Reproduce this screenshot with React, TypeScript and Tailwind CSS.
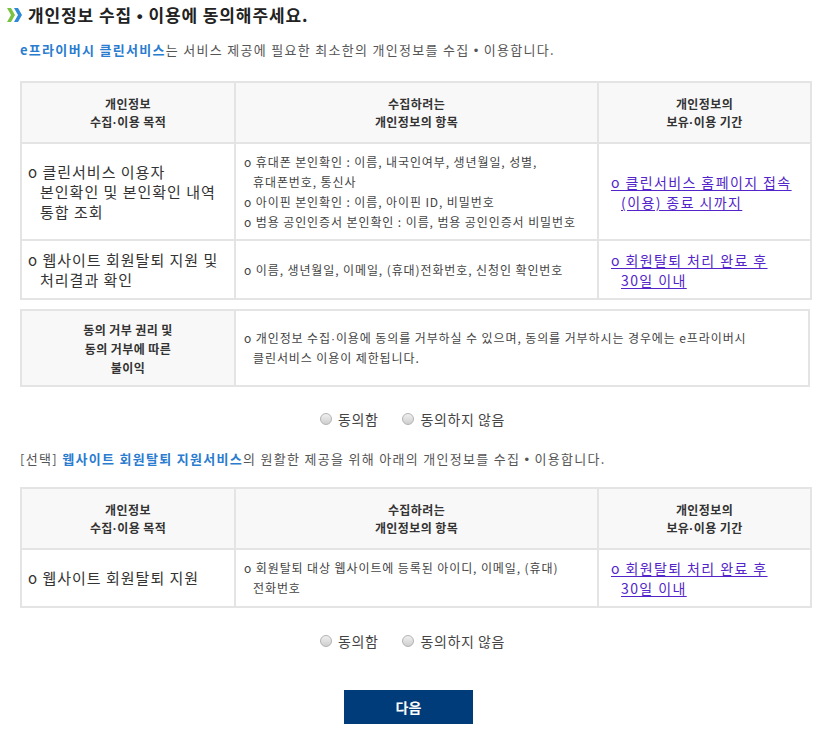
const FONT = { fontFamily: '"Noto Sans CJK KR", "Noto Sans", "Liberation Sans", sans-serif' };
const LATIN = { fontFamily: '"Liberation Sans", sans-serif' };

const Dot = ({ bullet }: { bullet?: boolean }) => (
  <span className="leading-none" style={LATIN}>{bullet ? '•' : '·'}</span>
);

const Chevrons = () => (
  <svg width="15" height="14" viewBox="0 0 15 14" className="shrink-0">
    <polygon points="0,0 4,0 8,7 4,14 0,14 4,7" fill="#7cc242" />
    <polygon points="7,0 11,0 15,7 11,14 7,14 11,7" fill="#2e8ad6" />
  </svg>
);

const Radio = ({ label }: { label: string }) => (
  <label className="flex items-center gap-[6px] text-[14px] tracking-[0.6px] text-[#444] leading-[20px]">
    <span className="w-[12px] h-[12px] rounded-full border border-[#b3b3b3] bg-gradient-to-b from-[#f0f0f0] to-[#cfcfcf]" />
    {label}
  </label>
);

const Radios = ({ className }: { className: string }) => (
  <div className={`flex items-center gap-[24px] ml-[300px] ${className}`}>
    <Radio label="동의함" />
    <Radio label="동의하지 않음" />
  </div>
);

const th = 'border-2 border-[#e4e4e4] bg-[#f8f8f8] text-[12px] tracking-[0.4px] font-bold text-[#333] leading-[18px] text-center align-middle';
const tdPurpose = 'border-2 border-[#e4e4e4] text-[15px] tracking-[1px] text-[#333] leading-[20px] align-middle pl-[18px] pr-1 indent-[-12px]';
const tdItems = 'border-2 border-[#e4e4e4] text-[12px] tracking-[0.9px] text-[#444] leading-[20px] align-middle pl-[17px] pr-1 indent-[-9px]';
const tdPeriod = 'border-2 border-[#e4e4e4] align-middle pl-[22px] pr-1';

const PeriodLink = ({ children }: { children: React.ReactNode }) => (
  <a href="#" className="block text-[14px] tracking-[1.4px] leading-[20px] text-[#5224c9] underline underline-offset-2 indent-[-10px]">
    {children}
  </a>
);

const Header = () => (
  <thead>
    <tr className="h-[61px]">
      <th className={th}>개인정보<br />수집<Dot />이용 목적</th>
      <th className={th}>수집하려는<br />개인정보의 항목</th>
      <th className={th}>개인정보의<br />보유<Dot />이용 기간</th>
    </tr>
  </thead>
);

const Cols = () => (
  <colgroup>
    <col className="w-[214px]" />
    <col className="w-[363px]" />
    <col className="w-[213px]" />
  </colgroup>
);

export default function App() {
  return (
    <div className="w-[826px] h-[734px] bg-white" style={FONT}>
      <div className="flex items-center gap-[6px] pl-[7px] pt-[3px] h-[27px]">
        <Chevrons />
        <h1 className="text-[17px] tracking-[0.9px] font-bold text-[#222] leading-[24px]">
          개인정보 수집 <Dot bullet /> 이용에 동의해주세요.
        </h1>
      </div>

      <div className="px-[20px]">
        <p className="mt-[13px] h-[20px] text-[13px] tracking-[1.3px] leading-[20px] text-[#555]">
          <span className="font-bold text-[#2a7ccf]">e프라이버시 클린서비스</span>는 서비스 제공에 필요한 최소한의 개인정보를 수집 <Dot bullet /> 이용합니다.
        </p>

        <table className="mt-[21px] w-[790px] table-fixed border-collapse">
          <Cols />
          <Header />
          <tbody>
            <tr className="h-[97px]">
              <td className={tdPurpose}>o 클린서비스 이용자<br />본인확인 및 본인확인 내역<br />통합 조회</td>
              <td className={tdItems}>
                <div>o 휴대폰 본인확인 : 이름, 내국인여부, 생년월일, 성별,<br />휴대폰번호, 통신사</div>
                <div>o 아이핀 본인확인 : 이름, 아이핀 ID, 비밀번호</div>
                <div>o 범용 공인인증서 본인확인 : 이름, 범용 공인인증서 비밀번호</div>
              </td>
              <td className={tdPeriod}>
                <PeriodLink>o 클린서비스 홈페이지 접속<br />(이용) 종료 시까지</PeriodLink>
              </td>
            </tr>
            <tr className="h-[59px]">
              <td className={tdPurpose}>o 웹사이트 회원탈퇴 지원 및<br />처리결과 확인</td>
              <td className={tdItems}>o 이름, 생년월일, 이메일, (휴대)전화번호, 신청인 확인번호</td>
              <td className={tdPeriod}>
                <PeriodLink>o 회원탈퇴 처리 완료 후<br />30일 이내</PeriodLink>
              </td>
            </tr>
          </tbody>
        </table>

        <table className="mt-[9px] w-[790px] table-fixed border-collapse">
          <colgroup>
            <col className="w-[214px]" />
            <col />
          </colgroup>
          <tbody>
            <tr className="h-[76px]">
              <td className="border-2 border-[#e4e4e4] bg-[#f8f8f8] text-[12px] tracking-[0.4px] font-bold text-[#333] leading-[19px] text-center align-middle">
                동의 거부 권리 및<br />동의 거부에 따른<br />불이익
              </td>
              <td className={tdItems}>
                o 개인정보 수집<Dot />이용에 동의를 거부하실 수 있으며, 동의를 거부하시는 경우에는 e프라이버시<br />클린서비스 이용이 제한됩니다.
              </td>
            </tr>
          </tbody>
        </table>

        <Radios className="mt-[22px]" />

        <p className="mt-[20px] h-[20px] text-[13px] tracking-[1.3px] leading-[20px] text-[#555]">
          [선택] <span className="font-bold text-[#2a7ccf]">웹사이트 회원탈퇴 지원서비스</span>의 원활한 제공을 위해 아래의 개인정보를 수집 <Dot bullet /> 이용합니다.
        </p>

        <table className="mt-[18px] w-[790px] table-fixed border-collapse">
          <Cols />
          <Header />
          <tbody>
            <tr className="h-[58px]">
              <td className={tdPurpose}>o 웹사이트 회원탈퇴 지원</td>
              <td className={tdItems}>o 회원탈퇴 대상 웹사이트에 등록된 아이디, 이메일, (휴대)<br />전화번호</td>
              <td className={tdPeriod}>
                <PeriodLink>o 회원탈퇴 처리 완료 후<br />30일 이내</PeriodLink>
              </td>
            </tr>
          </tbody>
        </table>

        <Radios className="mt-[23px]" />

        <button className="mt-[39px] ml-[324px] w-[129px] h-[34px] bg-[#003b7a] text-white text-[14px] font-bold">
          다음
        </button>
      </div>
    </div>
  );
}
